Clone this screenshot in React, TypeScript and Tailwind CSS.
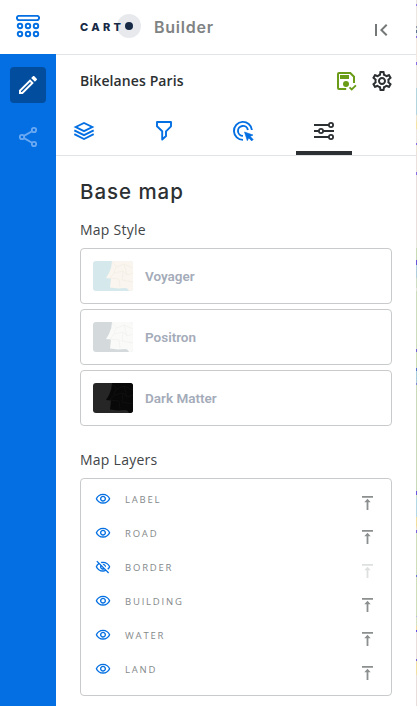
import React from "react";
import {
  MdFirstPage,
  MdOutlineEdit,
  MdOutlineSettings,
  MdOutlineVisibility,
  MdOutlineVisibilityOff,
} from "react-icons/md";

// Each band of the map's visible edge: where it starts, and its colour.
const mapEdge: [number, string][] = [
  [0, "#e8e3dc"], [4, "#9a7be4"], [6, "#ece6e0"], [26, "#8d97a8"], [28, "#e4e4de"], [30, "#5b7890"], [33, "#dde2e0"],
  [36, "#8a6be4"], [38, "#f0e8e0"], [62, "#8a6be4"], [65, "#ebe3dd"], [88, "#b5d3dc"], [115, "#ece2cc"], [121, "#f4e2a4"],
  [129, "#ece4de"], [143, "#8a6be4"], [145, "#ece5d6"], [152, "#eae1dd"], [172, "#8a6be4"], [175, "#e8dedb"],
  [240, "#e8e6dc"], [248, "#c9dbb6"], [260, "#6a55d8"], [265, "#b0cdda"], [278, "#cfdcc4"], [288, "#e8e6dc"],
  [291, "#cddcba"], [349, "#7a65d8"], [352, "#cadbb6"], [368, "#5a75d0"], [371, "#a9cdd8"], [383, "#8a85d4"],
  [385, "#c9dab8"], [491, "#6a55e0"], [495, "#cbdcc0"], [498, "#b3d6e2"], [517, "#f0dc9c"], [527, "#ecdfc6"],
  [530, "#8065e0"], [533, "#cfddba"], [575, "#6a75d8"], [577, "#cfddba"], [616, "#c0b4e4"], [617, "#d4dfc2"],
  [626, "#f0dca0"], [630, "#6a55e0"], [632, "#e8dedb"], [659, "#7a65e0"], [661, "#f2dfa4"], [675, "#e8dedb"],
];

function LogoGrid() {
  return (
    <svg className="h-6 w-6" viewBox="0 0 24 24" fill="none" stroke="#036fe2" strokeWidth="1.9">
      <rect x=".9" y=".9" width="22.2" height="4.2" rx="2.1" />
      {[11, 19].map((y) =>
        [4, 12, 20].map((x) => <circle key={`${x}-${y}`} cx={x} cy={y} r="2.25" />),
      )}
    </svg>
  );
}

function ShareIcon() {
  return (
    <svg className="h-6 w-6" viewBox="0 0 24 24" fill="none" stroke="#6ba9f2" strokeWidth="1.8">
      <circle cx="6" cy="12" r="2.2" />
      <circle cx="18" cy="5" r="2.2" />
      <circle cx="18" cy="19" r="2.2" />
      <path d="M8 10.9 16 6.2M8 13.1l8 4.7" />
    </svg>
  );
}

function SaveIcon() {
  return (
    <svg className="h-6 w-6" viewBox="0 0 24 24" fill="none">
      <path d="M12.2 20H5a1 1 0 0 1-1-1V5a1 1 0 0 1 1-1h11.3L20 7.7V14" stroke="#6b9c18" strokeWidth="2" />
      <path d="M6 6h9v4H6z" fill="#6b9c18" />
      <circle cx="12" cy="15" r="3" fill="#6b9c18" />
      <path d="m15.5 18.3 2.2 2.2 4.2-4.2" stroke="#6b9c18" strokeWidth="1.8" />
    </svg>
  );
}

function LayersIcon() {
  return (
    <svg className="h-6 w-6" viewBox="0 0 24 24" fill="none" stroke="#036fe2" strokeWidth="1.9">
      <path d="M3.7 8 12 4l8.3 4-8.3 4.1z" />
      <path d="m2.3 11.4 9.7 4.8 9.7-4.8M2.3 15.2l9.7 4.8 9.7-4.8" />
    </svg>
  );
}

function FilterIcon() {
  return (
    <svg className="h-6 w-6" viewBox="0 0 24 24" fill="none" stroke="#036fe2" strokeWidth="1.9">
      <path d="M5 3h14v4.3l-5 5V17l-3.8 3.6v-8.3L5 7.3z" strokeLinejoin="round" />
    </svg>
  );
}

function InteractionIcon() {
  return (
    <svg className="mr-[2px] h-6 w-6" viewBox="0 0 24 24" fill="none">
      <path d="M12 20.9A9 9 0 1 1 20.9 11M12 16.9A5 5 0 1 1 16.9 11" stroke="#036fe2" strokeWidth="1.9" />
      <path d="m13.5 13 8.5 3-2.8 1.4 3 3-1.5 1.5-3-3-1.4 2.8z" fill="#036fe2" stroke="#036fe2" strokeWidth=".6" />
    </svg>
  );
}

function SlidersIcon() {
  return (
    <svg className="h-6 w-6" viewBox="0 0 24 24" fill="none" stroke="#2c3032" strokeWidth="1.8">
      <path d="M2 6h14.8M2 12h4.8M11.2 12H22M2 18h14.8" />
      <circle cx="19" cy="6" r="2.1" />
      <circle cx="9" cy="12" r="2.1" />
      <circle cx="19" cy="18" r="2.1" />
    </svg>
  );
}

function TopIcon({ muted }: { muted: boolean }) {
  return (
    <svg className={`mt-2 h-[14px] w-[11px] ${muted ? "text-[#dedfdf]" : "text-[#8c8f8f]"}`} viewBox="0 0 11 14" fill="currentColor">
      <path d="M0 0h11v1.8H0zM5.5 2.8 8.7 6.3H6.4V14H4.6V6.3H2.3z" />
    </svg>
  );
}

function Thumbnail({ sea, land, line }: { sea: string; land: string; line: string }) {
  return (
    <svg className="h-[30px] w-10 rounded-[3px]" viewBox="0 0 40 30">
      <path d="M0 0h40v30H0z" fill={sea} />
      <path d="M19 0h21v30h-4q-1-3-4-3l-7 .5-8-1 1-9-5-.5 3-5q3-6 3-12z" fill={land} />
      <path d="m19 1 5 5 7-3 9 4M23 6l-2 6 9-2 4 4 6-2M21 12l-4 5 9 1 1 8M30 10l-1 9 11 2M31 3l3 11" fill="none" stroke={line} strokeWidth=".7" />
    </svg>
  );
}

const styles = [
  { name: "Voyager", sea: "#d5e8eb", land: "#faf6ef", line: "#f1ece2" },
  { name: "Positron", sea: "#d4dadc", land: "#fafaf9", line: "#f0f0ef" },
  { name: "Dark Matter", sea: "#262626", land: "#080808", line: "#121212" },
];

const layers = ["LABEL", "ROAD", "BORDER", "BUILDING", "WATER", "LAND"];

export default function App() {
  return (
    <div className="flex h-[706px] w-[417px] overflow-hidden bg-white font-['Open_Sans','Noto_Sans',sans-serif] text-[#2c3032]">
      <div className="flex w-14 shrink-0 flex-col">
        <div className="flex h-[54px] items-center justify-center">
          <LogoGrid />
        </div>
        <nav className="flex flex-1 flex-col items-center gap-4 bg-[#036fe2] pt-[13px]">
          <button className="flex h-9 w-9 items-center justify-center rounded bg-[#024d9e]">
            <MdOutlineEdit className="h-6 w-6 text-white" />
          </button>
          <button className="flex h-9 w-9 items-center justify-center">
            <ShareIcon />
          </button>
        </nav>
      </div>

      <div className="flex w-[360px] shrink-0 flex-col">
        <header className="flex h-[55px] shrink-0 items-center border-b border-[#e2e3e4] pr-6 pl-6">
          <div className="-mt-[2px] flex h-6 w-[61px] items-center font-['Inter',sans-serif] text-[11px] font-extrabold text-[#162945]">
            <span className="relative z-10 w-[37px] shrink-0 pt-[2px] whitespace-nowrap tracking-[3.3px]">CART</span>
            <span className="flex h-6 w-6 shrink-0 items-center justify-center rounded-full bg-[#e7e9ed]">
              <span className="h-2 w-2 rounded-full bg-[#162945]" />
            </span>
          </div>
          <h1 className="-mt-px ml-[13px] font-['Inter',sans-serif] text-base font-semibold tracking-[0.75px] text-[#7f8384]">Builder</h1>
          <MdFirstPage className="mt-[6px] -mr-[1px] ml-auto h-6 w-6 text-[#747878]" />
        </header>

        <div className="flex h-[52px] shrink-0 items-center px-6">
          <h2 className="text-sm font-semibold tracking-[0.1px]">Bikelanes Paris</h2>
          <div className="-mr-[2px] ml-auto flex gap-3">
            <SaveIcon />
            <MdOutlineSettings className="h-6 w-6" />
          </div>
        </div>

        <div className="flex h-[49px] shrink-0 gap-6 border-b border-[#e2e3e4]">
          {[LayersIcon, FilterIcon, InteractionIcon, SlidersIcon].map((Icon, i) => (
            <button key={i} className={`flex h-12 w-14 items-center justify-center ${i === 3 ? "border-b-4 border-[#2c3032] pt-1" : ""}`}>
              <Icon />
            </button>
          ))}
        </div>

        <main className="px-6 pt-6">
          <h2 className="font-['Inter',sans-serif] text-[20.5px] leading-6 font-medium tracking-[0.95px]">Base map</h2>
          <h3 className="mt-4 text-sm leading-5 tracking-[0.25px] text-[#414547]">Map Style</h3>
          <div className="mt-2 flex flex-col gap-[5px]">
            {styles.map(({ name, ...colors }) => (
              <div key={name} className="flex h-14 items-center gap-3 rounded border border-[#c9cacb] px-3">
                <Thumbnail {...colors} />
                <span className="pb-px font-['Roboto',sans-serif] text-[13.5px] leading-5 font-semibold text-[#a4abb9]">{name}</span>
              </div>
            ))}
          </div>
          <h3 className="mt-6 text-sm leading-5 tracking-[0.25px] text-[#414547]">Map Layers</h3>
          <div className="mt-2 h-[218px] rounded border border-[#c9cacb] pt-[3px] pr-[18px] pl-[14px]">
            {layers.map((name) => {
              const hidden = name === "BORDER";
              const Eye = hidden ? MdOutlineVisibilityOff : MdOutlineVisibility;
              return (
                <div key={name} className="flex h-[34px] items-center">
                  <Eye className="h-4 w-4 text-[#036fe2]" />
                  <span className="ml-[14px] pt-[2px] text-[9.5px] leading-4 tracking-[1.8px] text-[#85898a]">{name}</span>
                  <span className="ml-auto">
                    <TopIcon muted={hidden} />
                  </span>
                </div>
              );
            })}
          </div>
        </main>
      </div>

      <div className="flex w-px shrink-0 flex-col">
        {mapEdge.map(([start, color], i) => (
          <div
            key={start}
            className="w-px shrink-0"
            style={{ height: (mapEdge[i + 1]?.[0] ?? 706) - start, backgroundColor: color }}
          />
        ))}
      </div>
    </div>
  );
}
